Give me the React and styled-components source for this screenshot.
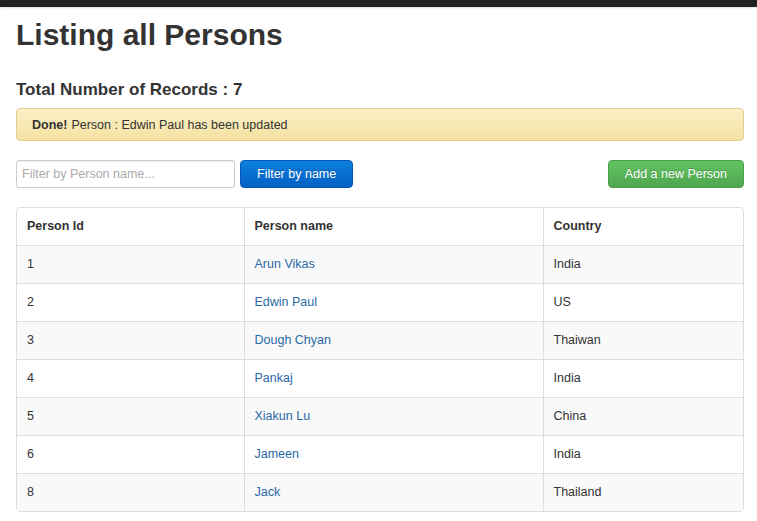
import React from "react";
import styled, { createGlobalStyle } from "styled-components";

const Global = createGlobalStyle`
  html, body { margin: 0; padding: 0; background: #fff; }
  body { font-family: "Liberation Sans", Arial, sans-serif; font-size: 13px; color: #333; }
`;

const NavBar = styled.div`
  height: 7px;
  background: #222;
  box-shadow: 0 1px 2px rgba(0,0,0,0.12);
`;

const Container = styled.div`
  width: 728px;
  padding: 0 16px;
`;

const Title = styled.h1`
  margin: 10px 0 0;
  font-size: 30px;
  line-height: 36px;
  font-weight: bold;
  color: #333;
`;

const SubTitle = styled.h3`
  margin: 26px 0 0;
  font-size: 17px;
  line-height: 22px;
  font-weight: bold;
  color: #333;
`;

const Alert = styled.div`
  margin-top: 7px;
  box-sizing: border-box;
  height: 33px;
  padding: 0 15px;
  display: flex;
  align-items: center;
  border: 1px solid #e2cc8e;
  border-radius: 4px;
  background: linear-gradient(to bottom, #fbf0c6 0%, #f5e2a2 100%);
  color: #333;
  font-size: 12.5px;
  b { margin-right: 4px; }
`;

const Toolbar = styled.div`
  margin-top: 19px;
  display: flex;
  align-items: center;
  gap: 5px;
`;

const Input = styled.input`
  box-sizing: border-box;
  width: 219px;
  height: 28px;
  padding: 0 5px;
  border: 1px solid #ccc;
  border-radius: 3px;
  font-family: "Liberation Sans", Arial, sans-serif;
  font-size: 12.5px;
  color: #555;
  box-shadow: inset 0 1px 1px rgba(0,0,0,0.075);
  &::placeholder { color: #aaa; }
`;

const Button = styled.button`
  box-sizing: border-box;
  height: 28px;
  padding: 0 ${p => p.$px}px;
  border-radius: 4px;
  border: 1px solid ${p => p.$border};
  background: linear-gradient(to bottom, ${p => p.$from} 0%, ${p => p.$to} 100%);
  color: #fff;
  font-family: "Liberation Sans", Arial, sans-serif;
  font-size: 12.5px;
  text-shadow: 0 -1px 0 rgba(0,0,0,0.2);
  cursor: pointer;
  ${p => p.$right && "margin-left: auto;"}
`;

const TableWrap = styled.div`
  margin-top: 19px;
  border: 1px solid #ddd;
  border-radius: 4px;
  overflow: hidden;
`;

const Table = styled.table`
  width: 100%;
  border-collapse: collapse;
  font-size: 12.5px;
`;

const Th = styled.th`
  text-align: left;
  height: 37px;
  padding: 0 10px;
  font-weight: bold;
  color: #333;
  border-left: ${p => (p.$first ? "none" : "1px solid #ddd")};
  width: ${p => p.$w}px;
  box-sizing: border-box;
`;

const Row = styled.tr`
  background: ${p => (p.$striped ? "#f9f9f9" : "#fff")};
`;

const Td = styled.td`
  height: 37px;
  padding: 0 10px;
  border-top: 1px solid #ddd;
  border-left: ${p => (p.$first ? "none" : "1px solid #ddd")};
  color: #333;
`;

const Link = styled.a`
  color: #2a6aa6;
  text-decoration: none;
`;

const people = [
  [1, "Arun Vikas", "India"],
  [2, "Edwin Paul", "US"],
  [3, "Dough Chyan", "Thaiwan"],
  [4, "Pankaj", "India"],
  [5, "Xiakun Lu", "China"],
  [6, "Jameen", "India"],
  [8, "Jack", "Thailand"],
];

export default function App() {
  return (
    <>
      <Global />
      <NavBar />
      <Container>
        <Title>Listing all Persons</Title>
        <SubTitle>Total Number of Records : 7</SubTitle>
        <Alert>
          <b>Done!</b> Person : Edwin Paul has been updated
        </Alert>
        <Toolbar>
          <Input placeholder="Filter by Person name..." />
          <Button $px={16} $from="#0c80dc" $to="#0460c4" $border="#0558b4">Filter by name</Button>
          <Button $right $px={16} $from="#62c462" $to="#4fa64f" $border="#4a9c4a">Add a new Person</Button>
        </Toolbar>
        <TableWrap>
          <Table>
            <thead>
              <tr>
                <Th $first $w={227}>Person Id</Th>
                <Th $w={299}>Person name</Th>
                <Th>Country</Th>
              </tr>
            </thead>
            <tbody>
              {people.map(([id, name, country], i) => (
                <Row key={id} $striped={i % 2 === 0}>
                  <Td $first>{id}</Td>
                  <Td><Link href="#">{name}</Link></Td>
                  <Td>{country}</Td>
                </Row>
              ))}
            </tbody>
          </Table>
        </TableWrap>
      </Container>
    </>
  );
}
